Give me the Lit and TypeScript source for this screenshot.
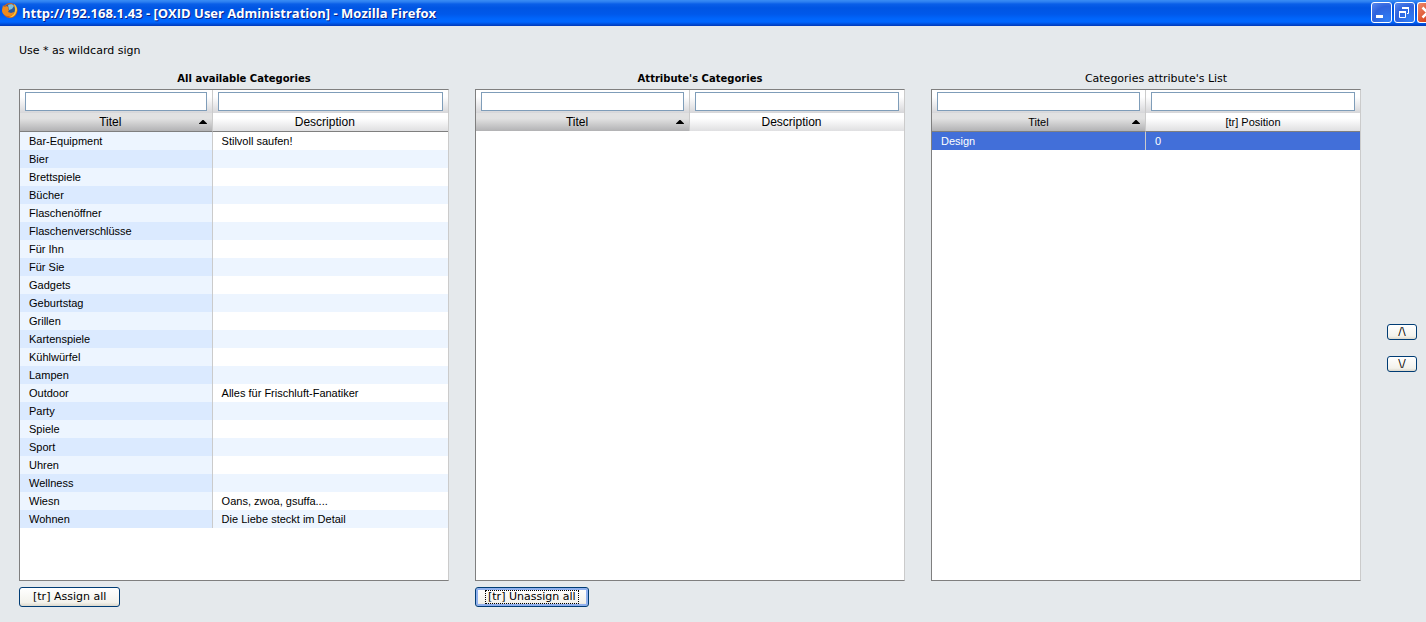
import { LitElement, html, css, svg, nothing } from "lit";
import { customElement, property } from "lit/decorators.js";

interface PanelRow {
  title: string;
  text: string;
  selected?: boolean;
}

const AVAILABLE: PanelRow[] = [
  { title: "Bar-Equipment", text: "Stilvoll saufen!" },
  { title: "Bier", text: "" },
  { title: "Brettspiele", text: "" },
  { title: "Bücher", text: "" },
  { title: "Flaschenöffner", text: "" },
  { title: "Flaschenverschlüsse", text: "" },
  { title: "Für Ihn", text: "" },
  { title: "Für Sie", text: "" },
  { title: "Gadgets", text: "" },
  { title: "Geburtstag", text: "" },
  { title: "Grillen", text: "" },
  { title: "Kartenspiele", text: "" },
  { title: "Kühlwürfel", text: "" },
  { title: "Lampen", text: "" },
  { title: "Outdoor", text: "Alles für Frischluft-Fanatiker" },
  { title: "Party", text: "" },
  { title: "Spiele", text: "" },
  { title: "Sport", text: "" },
  { title: "Uhren", text: "" },
  { title: "Wellness", text: "" },
  { title: "Wiesn", text: "Oans, zwoa, gsuffa...." },
  { title: "Wohnen", text: "Die Liebe steckt im Detail" },
];

const ORDERED: PanelRow[] = [{ title: "Design", text: "0", selected: true }];

@customElement("title-bar")
export class TitleBar extends LitElement {
  static styles = css`
    :host {
      display: flex;
      height: 26px;
      box-sizing: border-box;
      padding: 2px 0 0 2px;
      gap: 4px;
      background: linear-gradient(#3a8df5 0, #2a7df0 2px, #0a5fe8 4px, #0055e3 8px, #0058ea 14px, #0066fc 19px, #0066ff 22px, #0050dc 24px, #0038b8 26px);
      color: #fff;
    }
    .logo {
      width: 16px;
      height: 17px;
      flex: none;
    }
    .caption {
      flex: 1;
      margin: 0;
      font: bold 13px/22px "Open Sans", sans-serif;
      text-shadow: 1px 1px 0 #0a1f88;
      white-space: nowrap;
    }
    .controls {
      display: flex;
      gap: 2px;
    }
    .control {
      width: 21px;
      height: 21px;
      padding: 0;
      box-sizing: border-box;
      border: 1px solid #fff;
      border-radius: 3px;
      background: radial-gradient(circle at 80% 90%, #2f7df5, #2f63dd 60%, #5b8af0);
      overflow: hidden;
    }
    .close {
      width: 9px;
      border-right: 0;
      border-radius: 3px 0 0 3px;
      background: linear-gradient(135deg, #ee8a6c, #d8431c);
    }
    .glyph {
      display: block;
      width: 19px;
      height: 19px;
    }
  `;

  render() {
    return html`
      <svg class="logo" viewBox="0 0 16 17" aria-hidden="true">
        <circle cx="8" cy="8.500" r="7.500" fill="#d9620f" />
        <circle cx="8" cy="7.500" r="5.500" fill="#2c5a9c" />
        <path d="M6 3c2-1 5-1 6 1l-2 3-3 1z" fill="#7fc0dd" />
        <path d="M1 3l1 2 3-1 2 2-1 1 1 1-1 2 3 1 3-1c0 3-2 4-5 4-4 0-7-2-7-6z" fill="#ee8a1c" />
        <path d="M12 2c3 2 4 6 2 9-1 3-4 5-7 4 4-1 6-4 6-8z" fill="#fbc43a" />
      </svg>
      <h1 class="caption">http://192.168.1.43 - [OXID User Administration] - Mozilla Firefox</h1>
      <div class="controls">
        <button class="control" aria-label="Minimize">
          <svg class="glyph" viewBox="0 0 19 19"><path d="M4 12h7v3H4z" fill="#fff" /></svg>
        </button>
        <button class="control" aria-label="Restore">
          <svg class="glyph" viewBox="0 0 19 19" fill="none" stroke="#fff">
            <path d="M7.500 6V4.500h6v6H12M4.500 8.500h6v6h-6z" />
            <path d="M7 5h7M4 9h7" stroke-width="2" />
          </svg>
        </button>
        <button class="control close" aria-label="Close">
          <svg class="glyph" viewBox="0 0 19 19"><path d="M4.500 4.500l10 10m0-10l-10 10" stroke="#fff" stroke-width="2.500" /></svg>
        </button>
      </div>
    `;
  }
}

@customElement("category-panel")
export class CategoryPanel extends LitElement {
  @property() second = "Description";
  @property() layout: "striped" | "even" = "even";
  @property({ type: Boolean }) small = false;
  @property({ attribute: false }) rows: PanelRow[] = [];

  static styles = css`
    :host {
      display: block;
      flex: 1;
      box-sizing: border-box;
      border: 1px solid #7f7f7f;
      border-right-color: #cbcbcb;
      background: #fff;
      color: #000;
      font: 11px/18px "Liberation Sans", Arial, sans-serif;
    }
    .grid {
      width: 100%;
      table-layout: fixed;
      border-collapse: separate;
      border-spacing: 0;
    }
    .first {
      width: 50%;
    }
    .striped .first {
      width: 45%;
    }
    th,
    td {
      padding: 0;
      font-weight: normal;
      text-align: left;
    }
    th:first-child,
    td:first-child {
      border-right: 1px solid #cbcbcb;
    }
    .filter {
      height: 23px;
      box-sizing: border-box;
      padding: 2px 5px;
      background: linear-gradient(#fff 30%, #d6d6d9);
    }
    .query {
      display: block;
      width: 100%;
      height: 19px;
      box-sizing: border-box;
      border: 1px solid #7f9db9;
      background: #fff;
      padding: 0 4px;
      font: inherit;
    }
    .sort {
      display: flex;
      align-items: center;
      width: 100%;
      height: 18px;
      padding: 0 5px 0 2px;
      border: 0;
      background: linear-gradient(#fff 30%, #dfdfe1);
      color: inherit;
      font: 12px/18px "Liberation Sans", Arial, sans-serif;
    }
    .small .sort {
      padding-left: 13px;
      font-size: 11px;
    }
    .sort.sorted {
      background: linear-gradient(#e2e2e2 30%, #b2b2b4);
    }
    .label {
      flex: 1;
      text-align: center;
    }
    .arrow {
      width: 8px;
      height: 4px;
    }
    .filled .heading {
      border-bottom: 1px solid #7f7f7f;
    }
    td {
      height: 18px;
      padding: 0 9px;
      white-space: nowrap;
    }
    tbody tr:nth-child(even) td,
    td:first-child {
      background: #edf5ff;
    }
    tbody tr:nth-child(even) td:first-child {
      background: #dbeaff;
    }
    tbody .selected td,
    tbody .selected td:first-child {
      background: #426fd9;
      color: #fff;
    }
  `;

  private heading(label: string, sorted: boolean) {
    return html`
      <th class="heading" scope="col" aria-sort=${sorted ? "ascending" : "none"}>
        <button class="sort ${sorted ? "sorted" : ""}">
          <span class="label">${label}</span>
          <svg class="arrow" viewBox="0 0 8 4" aria-hidden="true">
            ${sorted ? svg`<path d="M3.500 0h1L8 3.500V4H0v-.5z" fill="#000" />` : nothing}
          </svg>
        </button>
      </th>
    `;
  }

  render() {
    const classes = `grid ${this.layout} ${this.small ? "small" : ""} ${this.rows.length ? "filled" : ""}`;
    return html`
      <table class=${classes}>
        <colgroup>
          <col class="first" />
          <col />
        </colgroup>
        <thead>
          <tr>
            <th class="filter"><input class="query" type="text" aria-label="Titel" /></th>
            <th class="filter"><input class="query" type="text" aria-label=${this.second} /></th>
          </tr>
          <tr>
            ${this.heading("Titel", true)} ${this.heading(this.second, false)}
          </tr>
        </thead>
        <tbody>
          ${this.rows.map(
            (row) => html`
              <tr class=${row.selected ? "selected" : ""}>
                <td>${row.title}</td>
                <td>${row.text}</td>
              </tr>
            `
          )}
        </tbody>
      </table>
    `;
  }
}

@customElement("app-root")
export class AppRoot extends LitElement {
  static styles = css`
    :host {
      display: flex;
      flex-direction: column;
      min-height: 100vh;
      background: #e5e9ec;
      color: #000;
      font: 11px/16px "DejaVu Sans", Verdana, sans-serif;
    }
    .page {
      flex: 1;
      display: flex;
      flex-direction: column;
      gap: 12px;
      padding: 17px 9px 15px 19px;
    }
    .hint {
      margin: 0;
    }
    .columns {
      flex: 1;
      display: grid;
      grid-template-columns: repeat(3, minmax(0, 1fr)) 30px;
      gap: 26px;
    }
    .column {
      display: flex;
      flex-direction: column;
    }
    .name {
      margin: 0 0 2px;
      padding-left: 20px;
      font: inherit;
      text-align: center;
    }
    .bold {
      font-size: 10px;
      font-weight: bold;
    }
    .actions {
      display: flex;
      height: 20px;
      margin-top: 6px;
    }
    .move {
      display: flex;
      flex-direction: column;
      justify-content: center;
      gap: 16px;
      padding-top: 17px;
    }
    .button {
      height: 20px;
      padding: 0 13px;
      border: 1px solid #003c74;
      border-radius: 3px;
      background: linear-gradient(#fff, #f3f2ec 80%, #dcd8cc);
      color: #000;
      font: inherit;
      white-space: nowrap;
    }
    .arrow {
      height: 16px;
      padding: 0;
      line-height: 14px;
    }
    .focused {
      padding: 0 9px;
      box-shadow: inset 0 0 0 2px #8fb0ee;
    }
    .dotted {
      display: block;
      padding: 0 2px;
      border: 1px dotted #000;
      line-height: 12px;
    }
  `;

  render() {
    return html`
      <title-bar></title-bar>
      <main class="page">
        <p class="hint">Use * as wildcard sign</p>
        <div class="columns">
          <section class="column">
            <h2 class="name bold">All available Categories</h2>
            <category-panel layout="striped" .rows=${AVAILABLE}></category-panel>
            <div class="actions"><button class="button">[tr] Assign all</button></div>
          </section>
          <section class="column">
            <h2 class="name bold">Attribute's Categories</h2>
            <category-panel></category-panel>
            <div class="actions">
              <button class="button focused"><span class="dotted">[tr] Unassign all</span></button>
            </div>
          </section>
          <section class="column">
            <h2 class="name">Categories attribute's List</h2>
            <category-panel second="[tr] Position" small .rows=${ORDERED}></category-panel>
            <div class="actions"></div>
          </section>
          <div class="move">
            <button class="button arrow" aria-label="Move up">/\\</button>
            <button class="button arrow" aria-label="Move down">\\/</button>
          </div>
        </div>
      </main>
    `;
  }
}
